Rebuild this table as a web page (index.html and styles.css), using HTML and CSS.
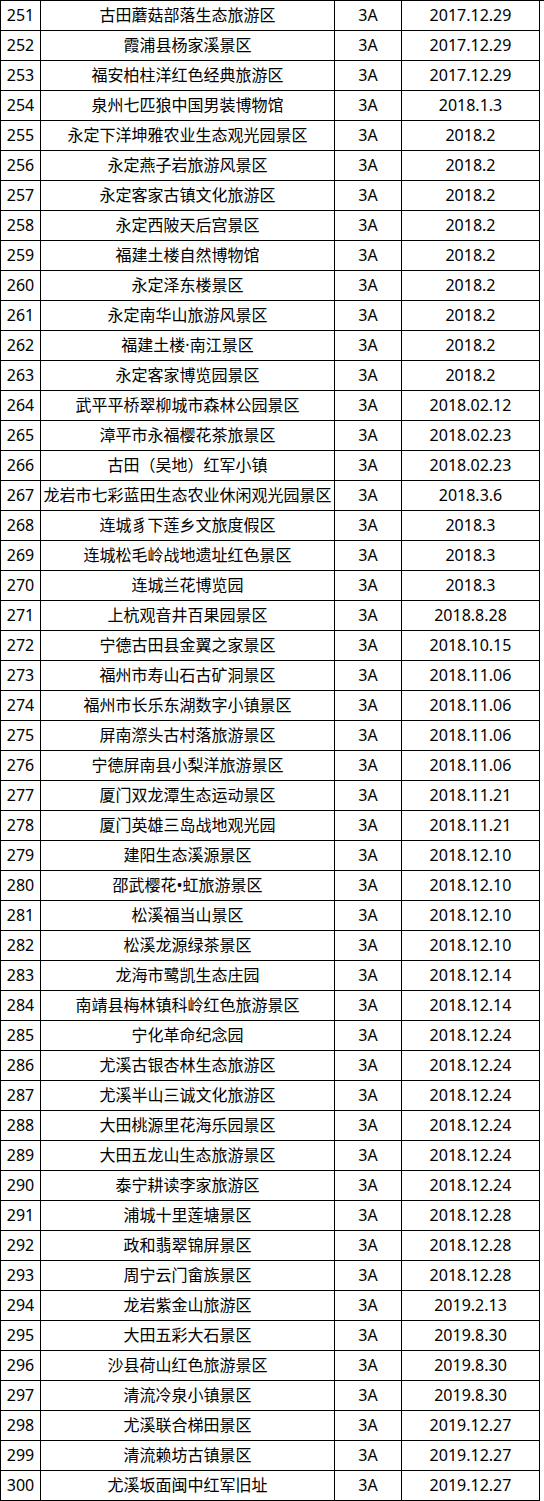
FILE: index.html
```html
<!DOCTYPE html>
<html lang="zh-CN">
<head>
<meta charset="utf-8">
<title>3A景区名单</title>
<link rel="stylesheet" href="styles.css">
</head>
<body>
<div class="sheet">
<div class="row"><div class="c num">251</div><div class="c name">古田蘑菇部落生态旅游区</div><div class="c lvl">3A</div><div class="c date">2017.12.29</div></div>
<div class="row"><div class="c num">252</div><div class="c name">霞浦县杨家溪景区</div><div class="c lvl">3A</div><div class="c date">2017.12.29</div></div>
<div class="row"><div class="c num">253</div><div class="c name">福安柏柱洋红色经典旅游区</div><div class="c lvl">3A</div><div class="c date">2017.12.29</div></div>
<div class="row"><div class="c num">254</div><div class="c name">泉州七匹狼中国男装博物馆</div><div class="c lvl">3A</div><div class="c date">2018.1.3</div></div>
<div class="row"><div class="c num">255</div><div class="c name">永定下洋坤雅农业生态观光园景区</div><div class="c lvl">3A</div><div class="c date">2018.2</div></div>
<div class="row"><div class="c num">256</div><div class="c name">永定燕子岩旅游风景区</div><div class="c lvl">3A</div><div class="c date">2018.2</div></div>
<div class="row"><div class="c num">257</div><div class="c name">永定客家古镇文化旅游区</div><div class="c lvl">3A</div><div class="c date">2018.2</div></div>
<div class="row"><div class="c num">258</div><div class="c name">永定西陂天后宫景区</div><div class="c lvl">3A</div><div class="c date">2018.2</div></div>
<div class="row"><div class="c num">259</div><div class="c name">福建土楼自然博物馆</div><div class="c lvl">3A</div><div class="c date">2018.2</div></div>
<div class="row"><div class="c num">260</div><div class="c name">永定泽东楼景区</div><div class="c lvl">3A</div><div class="c date">2018.2</div></div>
<div class="row"><div class="c num">261</div><div class="c name">永定南华山旅游风景区</div><div class="c lvl">3A</div><div class="c date">2018.2</div></div>
<div class="row"><div class="c num">262</div><div class="c name">福建土楼·南江景区</div><div class="c lvl">3A</div><div class="c date">2018.2</div></div>
<div class="row"><div class="c num">263</div><div class="c name">永定客家博览园景区</div><div class="c lvl">3A</div><div class="c date">2018.2</div></div>
<div class="row"><div class="c num">264</div><div class="c name">武平平桥翠柳城市森林公园景区</div><div class="c lvl">3A</div><div class="c date">2018.02.12</div></div>
<div class="row"><div class="c num">265</div><div class="c name">漳平市永福樱花茶旅景区</div><div class="c lvl">3A</div><div class="c date">2018.02.23</div></div>
<div class="row"><div class="c num">266</div><div class="c name">古田（吴地）红军小镇</div><div class="c lvl">3A</div><div class="c date">2018.02.23</div></div>
<div class="row"><div class="c num">267</div><div class="c name">龙岩市七彩蓝田生态农业休闲观光园景区</div><div class="c lvl">3A</div><div class="c date">2018.3.6</div></div>
<div class="row"><div class="c num">268</div><div class="c name">连城豸下莲乡文旅度假区</div><div class="c lvl">3A</div><div class="c date">2018.3</div></div>
<div class="row"><div class="c num">269</div><div class="c name">连城松毛岭战地遗址红色景区</div><div class="c lvl">3A</div><div class="c date">2018.3</div></div>
<div class="row"><div class="c num">270</div><div class="c name">连城兰花博览园</div><div class="c lvl">3A</div><div class="c date">2018.3</div></div>
<div class="row"><div class="c num">271</div><div class="c name">上杭观音井百果园景区</div><div class="c lvl">3A</div><div class="c date">2018.8.28</div></div>
<div class="row"><div class="c num">272</div><div class="c name">宁德古田县金翼之家景区</div><div class="c lvl">3A</div><div class="c date">2018.10.15</div></div>
<div class="row"><div class="c num">273</div><div class="c name">福州市寿山石古矿洞景区</div><div class="c lvl">3A</div><div class="c date">2018.11.06</div></div>
<div class="row"><div class="c num">274</div><div class="c name">福州市长乐东湖数字小镇景区</div><div class="c lvl">3A</div><div class="c date">2018.11.06</div></div>
<div class="row"><div class="c num">275</div><div class="c name">屏南漈头古村落旅游景区</div><div class="c lvl">3A</div><div class="c date">2018.11.06</div></div>
<div class="row"><div class="c num">276</div><div class="c name">宁德屏南县小梨洋旅游景区</div><div class="c lvl">3A</div><div class="c date">2018.11.06</div></div>
<div class="row"><div class="c num">277</div><div class="c name">厦门双龙潭生态运动景区</div><div class="c lvl">3A</div><div class="c date">2018.11.21</div></div>
<div class="row"><div class="c num">278</div><div class="c name">厦门英雄三岛战地观光园</div><div class="c lvl">3A</div><div class="c date">2018.11.21</div></div>
<div class="row"><div class="c num">279</div><div class="c name">建阳生态溪源景区</div><div class="c lvl">3A</div><div class="c date">2018.12.10</div></div>
<div class="row"><div class="c num">280</div><div class="c name">邵武樱花•虹旅游景区</div><div class="c lvl">3A</div><div class="c date">2018.12.10</div></div>
<div class="row"><div class="c num">281</div><div class="c name">松溪福当山景区</div><div class="c lvl">3A</div><div class="c date">2018.12.10</div></div>
<div class="row"><div class="c num">282</div><div class="c name">松溪龙源绿茶景区</div><div class="c lvl">3A</div><div class="c date">2018.12.10</div></div>
<div class="row"><div class="c num">283</div><div class="c name">龙海市鹭凯生态庄园</div><div class="c lvl">3A</div><div class="c date">2018.12.14</div></div>
<div class="row"><div class="c num">284</div><div class="c name">南靖县梅林镇科岭红色旅游景区</div><div class="c lvl">3A</div><div class="c date">2018.12.14</div></div>
<div class="row"><div class="c num">285</div><div class="c name">宁化革命纪念园</div><div class="c lvl">3A</div><div class="c date">2018.12.24</div></div>
<div class="row"><div class="c num">286</div><div class="c name">尤溪古银杏林生态旅游区</div><div class="c lvl">3A</div><div class="c date">2018.12.24</div></div>
<div class="row"><div class="c num">287</div><div class="c name">尤溪半山三诚文化旅游区</div><div class="c lvl">3A</div><div class="c date">2018.12.24</div></div>
<div class="row"><div class="c num">288</div><div class="c name">大田桃源里花海乐园景区</div><div class="c lvl">3A</div><div class="c date">2018.12.24</div></div>
<div class="row"><div class="c num">289</div><div class="c name">大田五龙山生态旅游景区</div><div class="c lvl">3A</div><div class="c date">2018.12.24</div></div>
<div class="row"><div class="c num">290</div><div class="c name">泰宁耕读李家旅游区</div><div class="c lvl">3A</div><div class="c date">2018.12.24</div></div>
<div class="row"><div class="c num">291</div><div class="c name">浦城十里莲塘景区</div><div class="c lvl">3A</div><div class="c date">2018.12.28</div></div>
<div class="row"><div class="c num">292</div><div class="c name">政和翡翠锦屏景区</div><div class="c lvl">3A</div><div class="c date">2018.12.28</div></div>
<div class="row"><div class="c num">293</div><div class="c name">周宁云门畲族景区</div><div class="c lvl">3A</div><div class="c date">2018.12.28</div></div>
<div class="row"><div class="c num">294</div><div class="c name">龙岩紫金山旅游区</div><div class="c lvl">3A</div><div class="c date">2019.2.13</div></div>
<div class="row"><div class="c num">295</div><div class="c name">大田五彩大石景区</div><div class="c lvl">3A</div><div class="c date">2019.8.30</div></div>
<div class="row"><div class="c num">296</div><div class="c name">沙县荷山红色旅游景区</div><div class="c lvl">3A</div><div class="c date">2019.8.30</div></div>
<div class="row"><div class="c num">297</div><div class="c name">清流冷泉小镇景区</div><div class="c lvl">3A</div><div class="c date">2019.8.30</div></div>
<div class="row"><div class="c num">298</div><div class="c name">尤溪联合梯田景区</div><div class="c lvl">3A</div><div class="c date">2019.12.27</div></div>
<div class="row"><div class="c num">299</div><div class="c name">清流赖坊古镇景区</div><div class="c lvl">3A</div><div class="c date">2019.12.27</div></div>
<div class="row"><div class="c num">300</div><div class="c name">尤溪坂面闽中红军旧址</div><div class="c lvl">3A</div><div class="c date">2019.12.27</div></div>
</div>
</body>
</html>
```
FILE: styles.css
```css
html, body {
  margin: 0;
  padding: 0;
  background: #fff;
}
.sheet {
  width: 543px;
  border-left: 1px solid #000;
  border-top: 1px solid #000;
  font-family: "Noto Sans", "Noto Sans CJK SC", sans-serif;
  font-size: 16px;
  color: #000;
}
.row {
  display: grid;
  grid-template-columns: 40px 294px 67px 138px;
}
.c {
  height: 29px;
  line-height: 29px;
  text-align: center;
  white-space: nowrap;
  overflow: hidden;
  border-right: 1px solid #000;
  border-bottom: 1px solid #000;
}
```
